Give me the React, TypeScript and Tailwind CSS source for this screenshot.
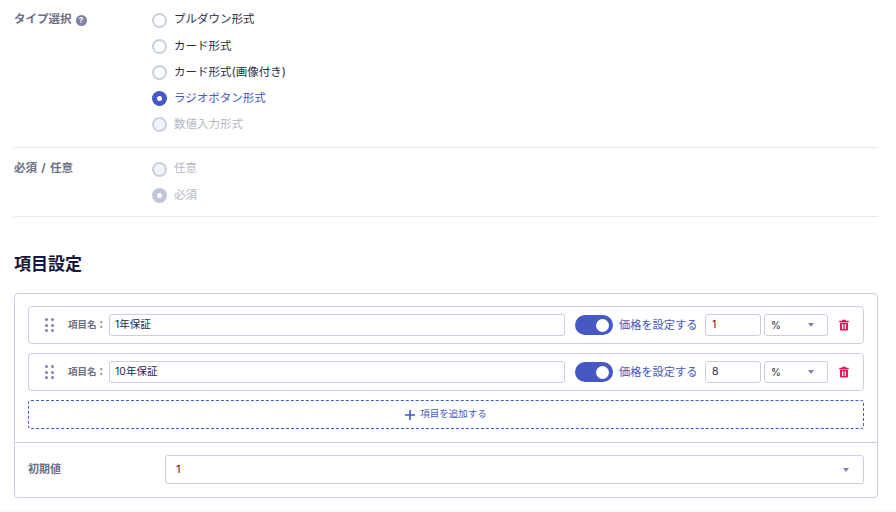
const font = { fontFamily: '"Inter", "Noto Sans CJK JP", sans-serif' };

const types = [
  { label: 'プルダウン形式' },
  { label: 'カード形式' },
  { label: 'カード形式(画像付き)' },
  { label: 'ラジオボタン形式', checked: true },
  { label: '数値入力形式', disabled: true },
];

function Radio({ label, checked, disabled }: { label: string; checked?: boolean; disabled?: boolean }) {
  let circle = 'border-2 border-[#c9cfe0] bg-white';
  if (checked) circle = disabled ? 'bg-[#c0c5da]' : 'bg-[#4558c4]';
  else if (disabled) circle = 'border-2 border-[#c9cfe0] bg-[#f1f3f8]';

  let text = 'text-[#2a2d45]';
  if (disabled) text = 'text-[#b4b7c2]';
  else if (checked) text = 'text-[#4558c4]';

  return (
    <div className="flex h-[26.2px] items-center">
      <span className={`flex h-[15px] w-[15px] items-center justify-center rounded-full ${circle}`}>
        {checked && <span className="h-[5px] w-[5px] rounded-full bg-white" />}
      </span>
      <span className={`ml-[7px] text-[11.5px] ${text}`}>{label}</span>
    </div>
  );
}

function DragHandle() {
  return (
    <div className="grid w-[9px] grid-cols-2 gap-x-[3px] gap-y-[2.5px]">
      {[0, 1, 2, 3, 4, 5].map((i) => (
        <span key={i} className="h-[3px] w-[3px] rounded-full bg-[#7d83a8]" />
      ))}
    </div>
  );
}

function Caret() {
  return <span className="h-0 w-0 border-x-[3.5px] border-t-[4px] border-x-transparent border-t-[#7d83a8]" />;
}

function TrashIcon() {
  return (
    <svg viewBox="0 0 12 12" className="ml-[10px] h-[12px] w-[12px] text-[#e8175d]">
      <path
        fill="currentColor"
        d="M1.2 1.8h2.6l.6-1h3.2l.6 1h2.6v1.4H1.2zM2 3.8h8v6.7c0 .6-.4 1-1 1H3c-.6 0-1-.4-1-1z"
      />
      <rect x="4.1" y="5.2" width="1.2" height="4.8" fill="#fff" />
      <rect x="6.7" y="5.2" width="1.2" height="4.8" fill="#fff" />
    </svg>
  );
}

function ItemRow({ name, price }: { name: string; price: string }) {
  return (
    <div className="flex h-[38px] items-center rounded-[4px] border border-[#c9cfe0] pl-[16px] pr-[12px]">
      <DragHandle />
      <span className="ml-[14px] w-[41px] text-[9.5px] font-bold text-[#6b6f85]">項目名：</span>
      <div className="flex h-[22px] w-[456px] items-center rounded-[3px] border border-[#c9cfe0] px-[5px] text-[10.5px] text-[#2a1f4a]">
        {name}
      </div>
      <span className="ml-[10px] flex h-[20px] w-[38px] items-center justify-end rounded-full bg-[#4558c4] pr-[4px]">
        <span className="h-[13px] w-[13px] rounded-full bg-white" />
      </span>
      <span className="ml-[6px] w-[79px] whitespace-nowrap text-[11.2px] text-[#4558c4]">価格を設定する</span>
      <div className="ml-[7px] flex h-[22px] w-[56px] items-center rounded-[3px] border border-[#c9cfe0] px-[6px] text-[10.5px] text-[#2a1f4a]">
        {price}
      </div>
      <div className="ml-[3px] flex h-[22px] w-[64px] items-center justify-between rounded-[3px] border border-[#c9cfe0] pl-[6px] pr-[13px] text-[10px] text-[#2a2d45]">
        %
        <Caret />
      </div>
      <TrashIcon />
    </div>
  );
}

export default function App() {
  return (
    <div className="flex h-[512px] w-[896px] flex-col overflow-hidden bg-white" style={font}>
      <div className="ml-[14px] w-[864px] flex-1">
        <section className="flex h-[148px] border-b border-[#e6e8f0] pt-[7px]">
          <div className="flex h-[26px] w-[138px] items-center text-[11.5px] font-bold text-[#6b6f85]">
            タイプ選択
            <span className="ml-[4px] flex h-[11px] w-[11px] items-center justify-center rounded-full bg-[#7d83a8] text-[8px] text-white">?</span>
          </div>
          <div>
            {types.map((t) => (
              <Radio key={t.label} {...t} />
            ))}
          </div>
        </section>

        <section className="flex h-[69px] border-b border-[#e6e8f0] pt-[8px]">
          <div className="flex h-[26px] w-[138px] items-center text-[11.5px] font-bold text-[#6b6f85] [word-spacing:1.5px]">必須 / 任意</div>
          <div>
            <Radio label="任意" disabled />
            <Radio label="必須" checked disabled />
          </div>
        </section>

        <h2 className="mt-[35px] text-[17px] font-bold leading-[24px] text-[#16193d]">項目設定</h2>

        <div className="mt-[17px] h-[205px] rounded-[4px] border border-[#c9cfe0]">
          <div className="flex flex-col gap-[9px] px-[13px] pt-[12px]">
            <ItemRow name="1年保証" price="1" />
            <ItemRow name="10年保証" price="8" />
            <div className="flex h-[29px] items-center justify-center rounded-[3px] border border-dashed border-[#4558c4] text-[9.5px] text-[#4558c4]">
              <svg viewBox="0 0 10 10" className="mr-[5px] h-[10px] w-[10px]">
                <path d="M5 0v10M0 5h10" stroke="currentColor" strokeWidth="1.6" />
              </svg>
              項目を追加する
            </div>
          </div>
          <div className="mt-[13px] flex h-[55px] items-center border-t border-[#c9cfe0] px-[13px] pb-[1px]">
            <span className="w-[137px] text-[11px] font-bold text-[#6b6f85]">初期値</span>
            <div className="flex h-[29px] flex-1 items-center justify-between rounded-[3px] border border-[#c9cfe0] pl-[10px] pr-[14px] text-[11px] text-[#2a1f4a]">
              1
              <Caret />
            </div>
          </div>
        </div>
      </div>
      <div className="h-[2px] bg-[#fafafa]" />
    </div>
  );
}
